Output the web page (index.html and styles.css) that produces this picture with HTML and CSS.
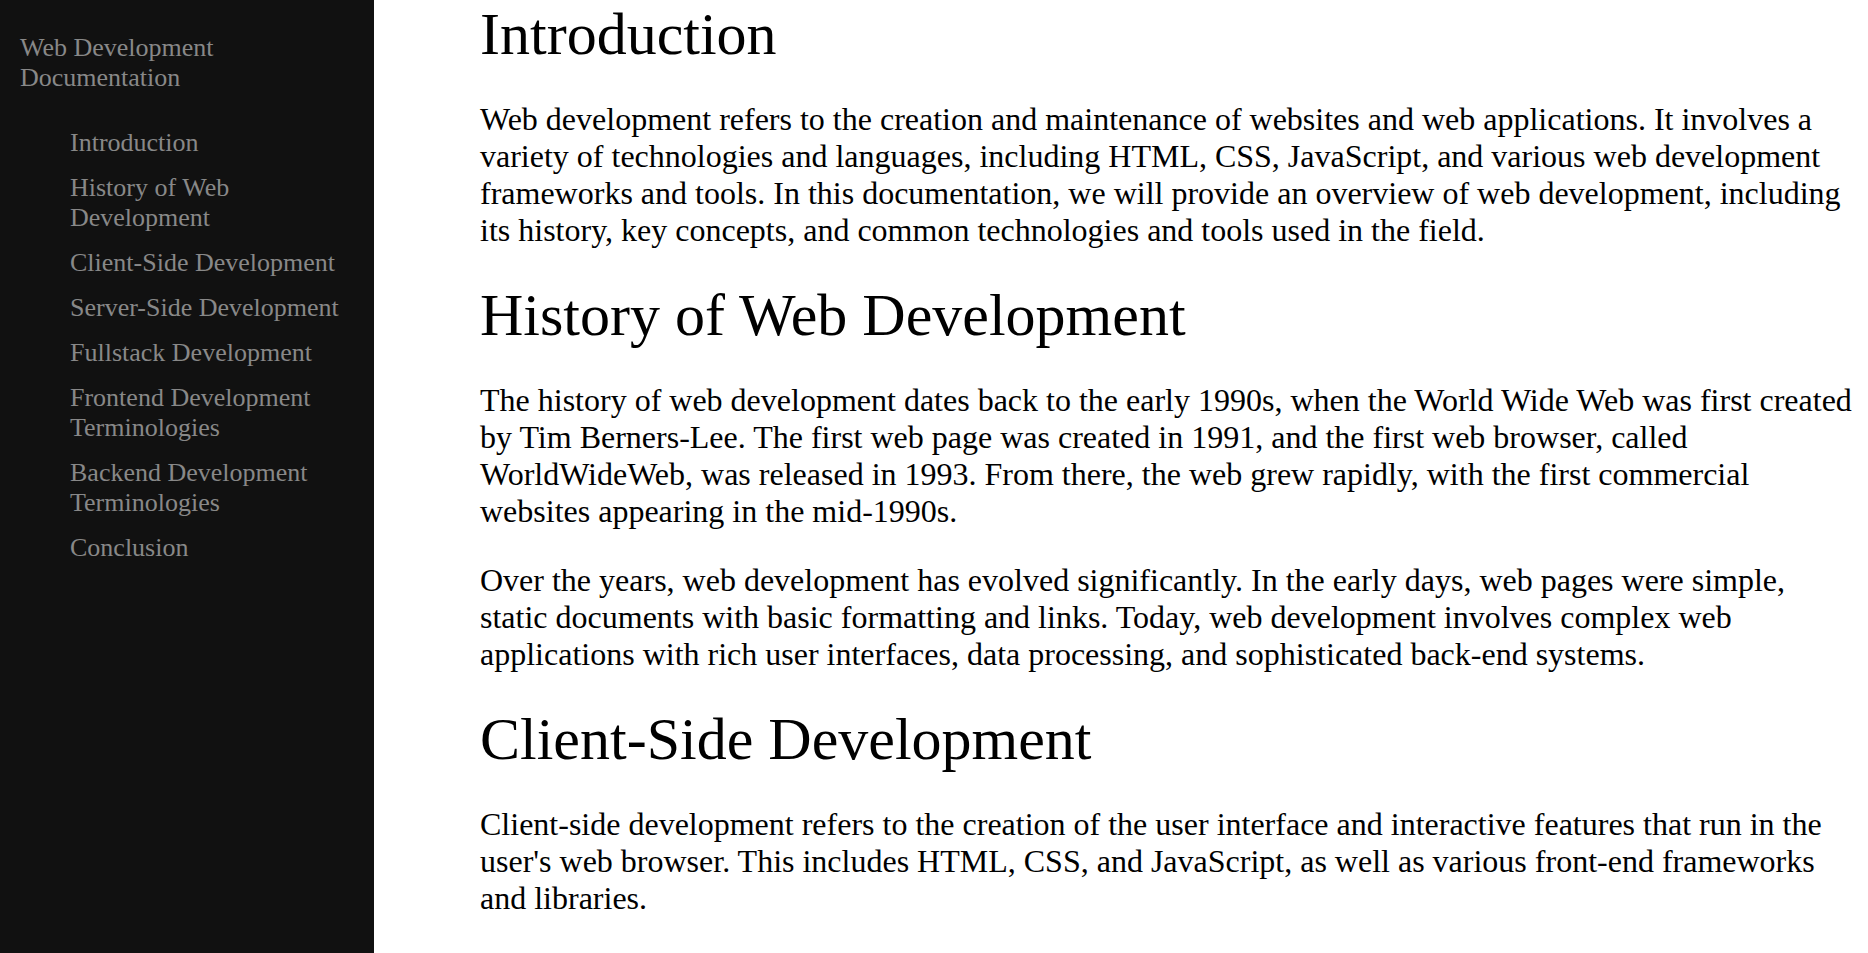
FILE: index.html
```html
<!DOCTYPE html>
<html lang="en">
<head>
<meta charset="utf-8">
<title>Web Development Documentation</title>
<link rel="stylesheet" href="styles.css">
</head>
<body>
<div class="page">
  <nav class="sidebar" id="navbar">
    <header class="sidebar-title">Web Development Documentation</header>
    <ul class="nav-list">
      <li><a class="nav-link" href="#Introduction">Introduction</a></li>
      <li><a class="nav-link" href="#History_of_Web_Development">History of Web Development</a></li>
      <li><a class="nav-link" href="#Client-Side_Development">Client-Side Development</a></li>
      <li><a class="nav-link" href="#Server-Side_Development">Server-Side Development</a></li>
      <li><a class="nav-link" href="#Fullstack_Development">Fullstack Development</a></li>
      <li><a class="nav-link" href="#Frontend_Development_Terminologies">Frontend Development Terminologies</a></li>
      <li><a class="nav-link" href="#Backend_Development_Terminologies">Backend Development Terminologies</a></li>
      <li><a class="nav-link" href="#Conclusion">Conclusion</a></li>
    </ul>
  </nav>
  <main class="main" id="main-doc">
    <section class="main-section" id="Introduction">
      <header class="section-title">Introduction</header>
      <p class="text">Web development refers to the creation and maintenance of websites and web applications. It involves a variety of technologies and languages, including HTML, CSS, JavaScript, and various web development frameworks and tools. In this documentation, we will provide an overview of web development, including its history, key concepts, and common technologies and tools used in the field.</p>
    </section>
    <section class="main-section" id="History_of_Web_Development">
      <header class="section-title">History of Web Development</header>
      <p class="text">The history of web development dates back to the early 1990s, when the World Wide Web was first created by Tim Berners-Lee. The first web page was created in 1991, and the first web browser, called WorldWideWeb, was released in 1993. From there, the web grew rapidly, with the first commercial websites appearing in the mid-1990s.</p>
      <p class="text">Over the years, web development has evolved significantly. In the early days, web pages were simple, static documents with basic formatting and links. Today, web development involves complex web applications with rich user interfaces, data processing, and sophisticated back-end systems.</p>
    </section>
    <section class="main-section" id="Client-Side_Development">
      <header class="section-title">Client-Side Development</header>
      <p class="text">Client-side development refers to the creation of the user interface and interactive features that run in the user's web browser. This includes HTML, CSS, and JavaScript, as well as various front-end frameworks and libraries.</p>
    </section>
  </main>
</div>
</body>
</html>
```
FILE: styles.css
```css
html, body {
  margin: 0;
  padding: 0;
}

body {
  font-family: "Liberation Serif", "Times New Roman", serif;
  color: #000;
  background: #fff;
}

.page {
  display: flex;
  align-items: flex-start;
  min-height: 100vh;
}

.sidebar {
  flex: 0 0 374px;
  width: 374px;
  min-height: 100vh;
  align-self: stretch;
  background: #111111;
  box-sizing: border-box;
  padding: 33px 20px 20px 20px;
}

.sidebar-title {
  font-size: 26px;
  color: #888888;
}

.nav-list {
  list-style: none;
  margin: 35px 0 0 0;
  padding: 0 0 0 50px;
  display: flex;
  flex-direction: column;
  gap: 15px;
}

.nav-link {
  display: block;
  font-size: 26px;
  color: #888888;
  text-decoration: none;
}

.main {
  flex: 1 1 auto;
  min-width: 0;
  padding: 0 13px 0 106px;
}

.main-section {
  margin: 0;
}

.section-title {
  display: block;
  font-size: 60px;
  font-weight: normal;
  margin: 0;
}

.main-section + .main-section {
  margin-top: 32px;
}

.text {
  font-size: 32px;
  margin: 32px 0 0 0;
}
```
